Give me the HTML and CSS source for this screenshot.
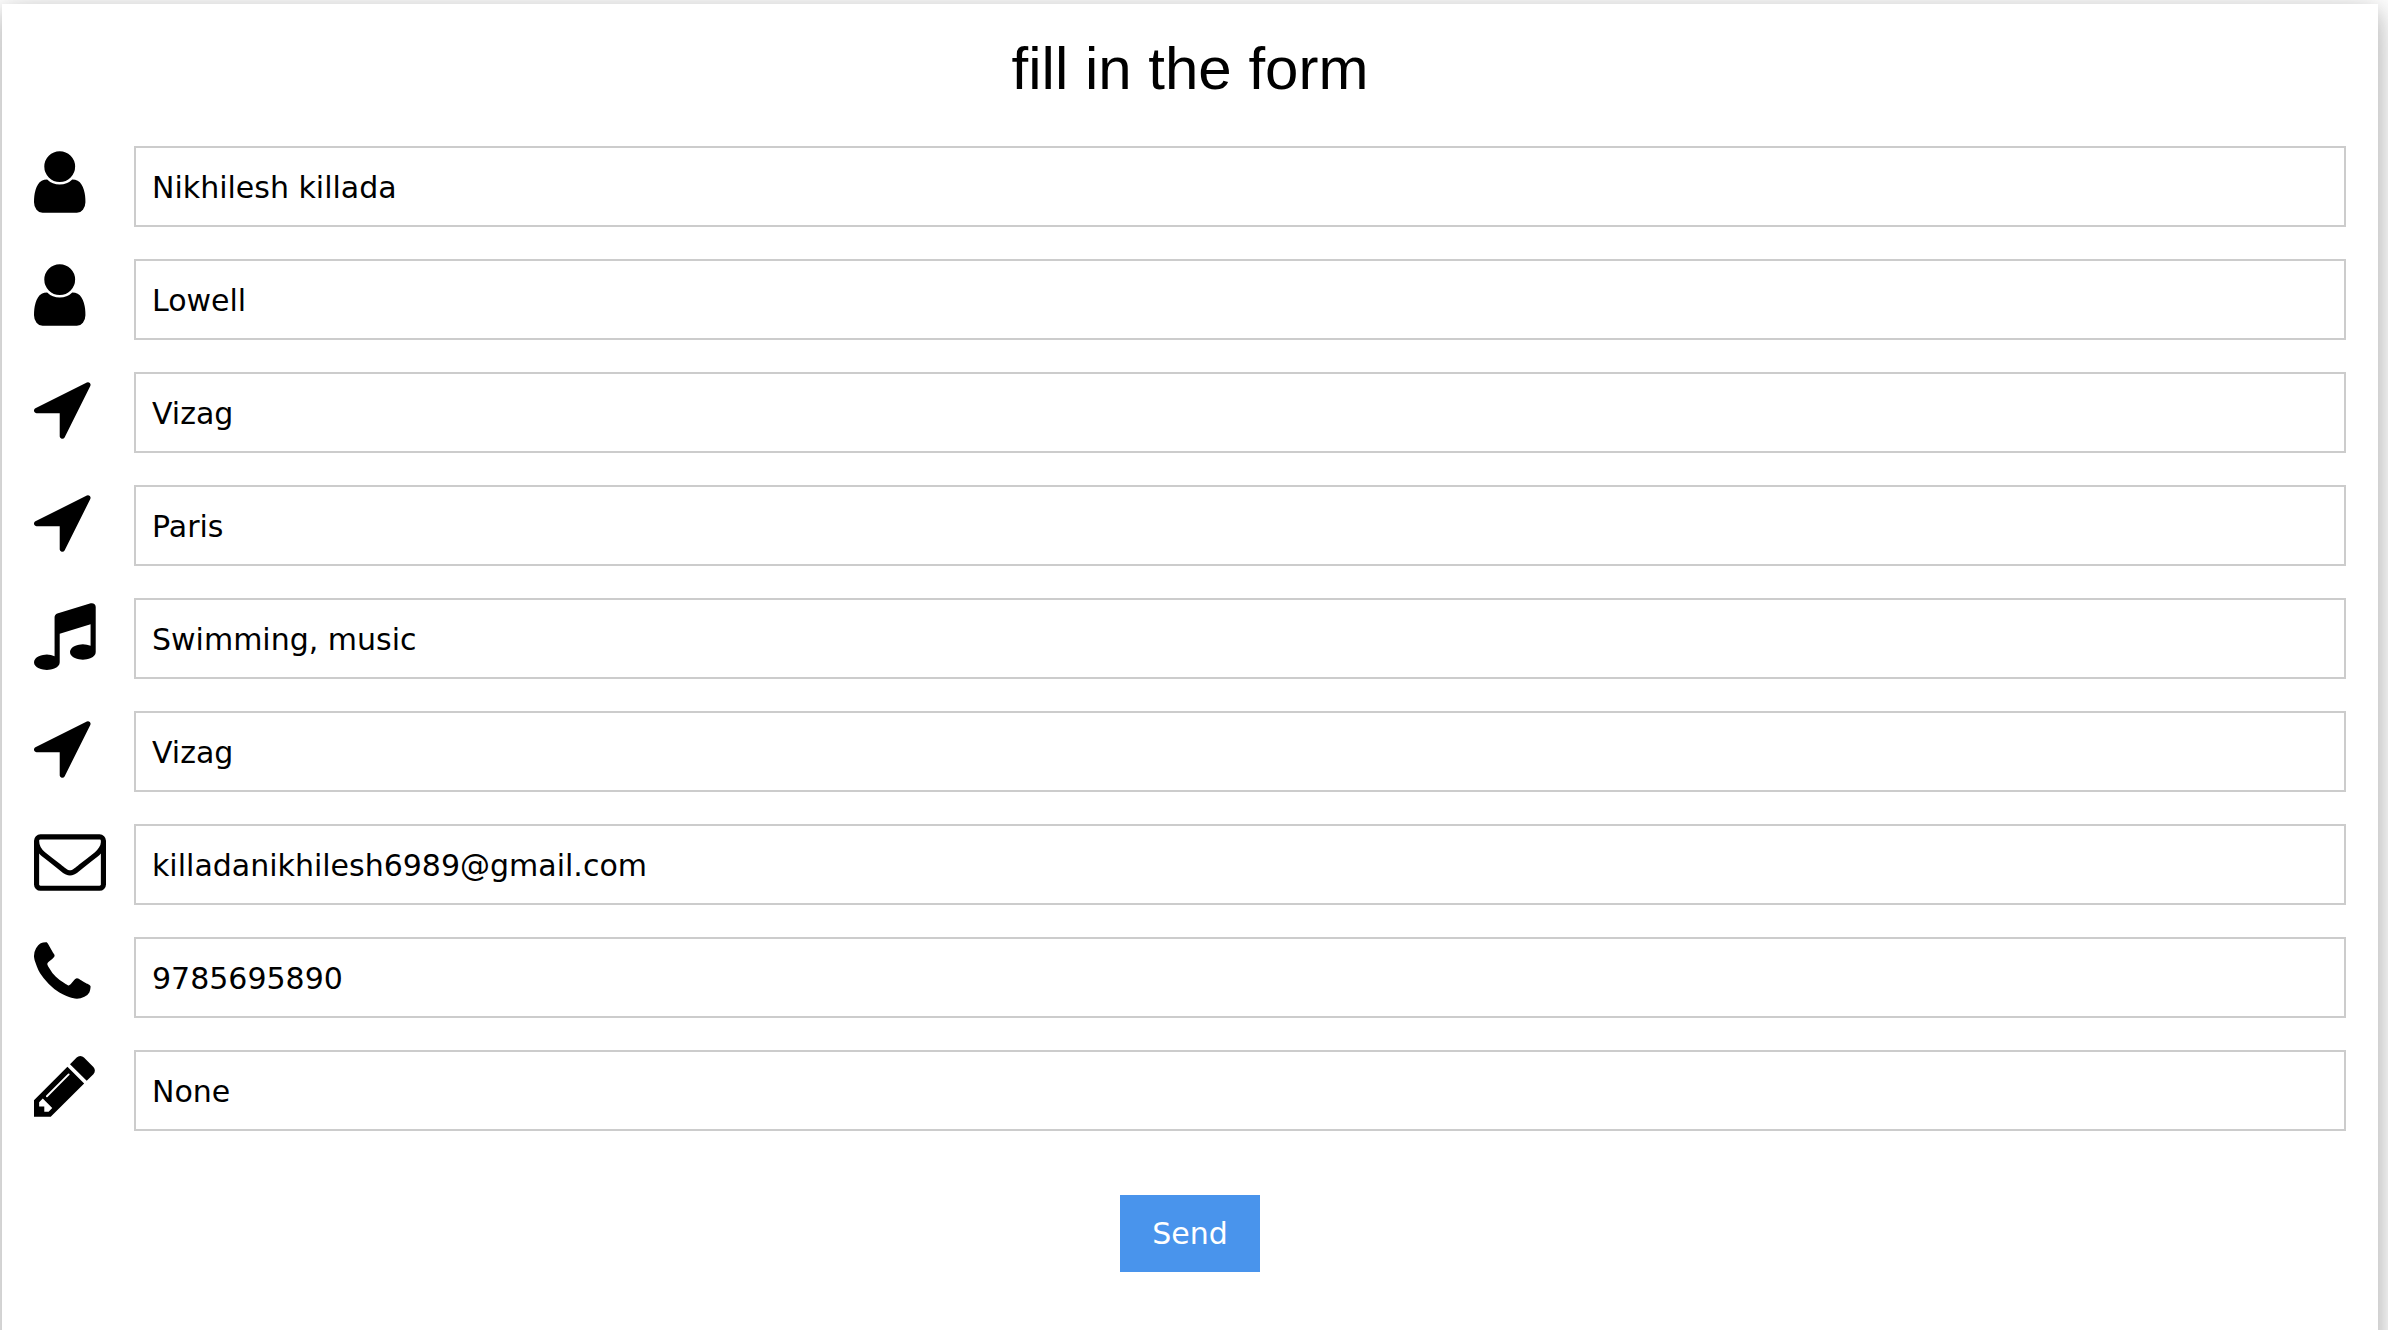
FILE: index.html
```html
<!DOCTYPE html>
<html lang="en">
<head>
<meta charset="utf-8">
<meta name="viewport" content="width=device-width, initial-scale=1">
<title>fill in the form</title>
<link rel="stylesheet" href="styles.css">
</head>
<body>
<svg class="sprite" aria-hidden="true">
  <symbol id="user" viewBox="256 0 1792 1792"><path d="M1536 1399q0 109-62.5 187t-150.5 78h-854q-88 0-150.5-78t-62.5-187q0-85 8.5-160.5t31.5-152 58.5-131 94-89 134.5-34.5q131 128 313 128t313-128q76 0 134.5 34.5t94 89 58.5 131 31.5 152 8.5 160.5zm-256-887q0 159-112.5 271.5t-271.5 112.5-271.5-112.5-112.5-271.5 112.5-271.5 271.5-112.5 271.5 112.5 112.5 271.5z"/></symbol>
  <symbol id="arrow" viewBox="192 0 1792 1792"><path d="M1593 349l-640 1280q-17 35-57 35-5 0-15-2-22-5-35.5-22.5t-13.5-39.5v-576h-576q-22 0-39.5-13.5t-22.5-35.5 4-42 29-30l1280-640q13-7 29-7 27 0 45 19 15 14 18.5 34.5t-6.5 39.5z"/></symbol>
  <symbol id="music" viewBox="128 0 1792 1792"><path d="M1664 224v1120q0 50-34 89t-86 60.5-103.5 32-96.5 10.5-96.5-10.5-103.5-32-86-60.5-34-89 34-89 86-60.5 103.5-32 96.5-10.5q105 0 192 39v-537l-768 237v709q0 50-34 89t-86 60.5-103.5 32-96.5 10.5-96.5-10.5-103.5-32-86-60.5-34-89 34-89 86-60.5 103.5-32 96.5-10.5q105 0 192 39v-967q0-31 19-56.5t49-35.5l832-256q12-4 28-4 40 0 68 28t28 68z"/></symbol>
  <symbol id="envelope" viewBox="0 0 1792 1792"><path d="M1664 1504v-768q-32 36-69 66-268 206-426 338-51 43-83 67t-86.5 48.5-102.5 24.5h-2q-48 0-102.5-24.5t-86.5-48.5-83-67q-158-132-426-338-37-30-69-66v768q0 13 9.5 22.5t22.5 9.5h1472q13 0 22.5-9.5t9.5-22.5zm0-1051v-24.5l-.5-13-3-12.5-5.5-9-9-7.5-14-2.5h-1472q-13 0-22.5 9.5t-9.5 22.5q0 168 147 284 193 152 401 317 6 5 35 29.5t46 37.5 44.5 31.5 50.5 27.5 43 9h2q20 0 43-9t50.5-27.5 44.5-31.5 46-37.5 35-29.5q208-165 401-317 54-43 100.5-115.5t46.5-131.5zm128-37v1088q0 66-47 113t-113 47h-1472q-66 0-113-47t-47-113v-1088q0-66 47-113t113-47h1472q66 0 113 47t47 113z"/></symbol>
  <symbol id="phone" viewBox="192 0 1792 1792"><path d="M1600 1240q0 27-10 70.5t-21 68.5q-21 50-122 106-94 51-186 51-27 0-52.5-3.5t-57.5-12.5-47.5-14.5-55.5-20.5-49-18q-98-35-175-83-128-79-264.5-215.5t-215.5-264.5q-48-77-83-175-3-9-18-49t-20.5-55.5-14.5-47.5-12.5-57.5-3.5-52.5q0-92 51-186 56-101 106-122 25-11 68.5-21t70.5-10q14 0 21 3 18 6 53 76 11 19 30 54t35 63.5 31 53.5q3 4 17.5 25t21.5 35.5 7 28.5q0 20-28.5 50t-62 55-62 53-28.5 46q0 9 5 22.5t8.5 20.5 14 24 11.5 19q76 137 174 235t235 174q2 1 19 11.5t24 14 20.5 8.5 22.5 5q18 0 46-28.5t53-62 55-62 50-28.5q14 0 28.5 7t35.5 21.5 25 17.5q25 15 53.5 31t63.5 35 54 30q70 35 76 53 3 7 3 21z"/></symbol>
  <symbol id="pencil" viewBox="128 0 1792 1792"><path d="M491 1536l91-91-235-235-91 91v107h128v128h107zm523-928q0-22-22-22-10 0-17 7l-542 542q-7 7-7 17 0 22 22 22 10 0 17-7l542-542q7-7 7-17zm-54-192l416 416-832 832h-416v-416zm683 96q0 53-37 90l-166 166-416-416 166-165q36-38 90-38 53 0 91 38l235 234q37 39 37 91z"/></symbol>
</svg>
<main class="page">
  <form class="card">
    <h2 class="title">fill in the form</h2>
    <div class="fields">
      <div class="row">
        <label class="icon" for="name"><svg aria-hidden="true"><use href="#user"/></svg></label>
        <input class="input" id="name" type="text" aria-label="Name" value="Nikhilesh killada">
      </div>
      <div class="row">
        <label class="icon" for="college"><svg aria-hidden="true"><use href="#user"/></svg></label>
        <input class="input" id="college" type="text" aria-label="Second name" value="Lowell">
      </div>
      <div class="row">
        <label class="icon" for="place1"><svg aria-hidden="true"><use href="#arrow"/></svg></label>
        <input class="input" id="place1" type="text" aria-label="Location" value="Vizag">
      </div>
      <div class="row">
        <label class="icon" for="place2"><svg aria-hidden="true"><use href="#arrow"/></svg></label>
        <input class="input" id="place2" type="text" aria-label="Second location" value="Paris">
      </div>
      <div class="row">
        <label class="icon" for="hobbies"><svg aria-hidden="true"><use href="#music"/></svg></label>
        <input class="input" id="hobbies" type="text" aria-label="Hobbies" value="Swimming, music">
      </div>
      <div class="row">
        <label class="icon" for="place3"><svg aria-hidden="true"><use href="#arrow"/></svg></label>
        <input class="input" id="place3" type="text" aria-label="Third location" value="Vizag">
      </div>
      <div class="row">
        <label class="icon" for="email"><svg aria-hidden="true"><use href="#envelope"/></svg></label>
        <input class="input" id="email" type="email" aria-label="Email" value="killadanikhilesh6989@gmail.com">
      </div>
      <div class="row">
        <label class="icon" for="phone-number"><svg aria-hidden="true"><use href="#phone"/></svg></label>
        <input class="input" id="phone-number" type="tel" aria-label="Phone" value="9785695890">
      </div>
      <div class="row">
        <label class="icon" for="message"><svg aria-hidden="true"><use href="#pencil"/></svg></label>
        <input class="input" id="message" type="text" aria-label="Message" value="None">
      </div>
    </div>
    <button class="send" type="submit">Send</button>
  </form>
</main>
</body>
</html>
```

FILE: styles.css
```css
*,
*::before,
*::after {
  box-sizing: border-box;
}

body {
  margin: 0;
  background: #fff;
  color: #000;
  font-family: Verdana, "DejaVu Sans", sans-serif;
  font-size: 30px;
  line-height: 45px;
}

.sprite {
  display: none;
}

.page {
  display: flex;
  min-height: 100vh;
  padding: 4px 10px 0 2px;
  overflow: hidden;
}

/* The card runs on past the bottom of the page. */
.card {
  display: flex;
  flex: 1;
  flex-direction: column;
  align-items: center;
  min-width: 0;
  margin-bottom: -80px;
  padding: 20px 32px 120px;
  background: #fff;
  box-shadow: 0 8px 20px rgba(0, 0, 0, 0.2), 0 8px 40px rgba(0, 0, 0, 0.19);
}

.title {
  margin: 0 0 32px;
  font-family: "Liberation Sans", Arial, sans-serif;
  font-size: 60px;
  font-weight: 400;
  line-height: 90px;
}

.fields {
  display: flex;
  flex-direction: column;
  gap: 32px;
  align-self: stretch;
}

.row {
  display: flex;
  align-items: flex-start;
}

.icon {
  flex: 0 0 100px;
}

.icon svg {
  display: block;
  width: 72px;
  height: 72px;
  fill: #000;
}

.input {
  flex: 1;
  min-width: 0;
  padding: 17px 16px 15px;
  border: 2px solid #ccc;
  border-radius: 0;
  background: #fff;
  color: #000;
  font: inherit;
  line-height: 45px;
  height: 81px;
}

.send {
  margin-top: 64px;
  padding: 16px 32px;
  border: 0;
  background: #4994ec;
  color: #fff;
  font: inherit;
  line-height: 45px;
  cursor: pointer;
}
```
